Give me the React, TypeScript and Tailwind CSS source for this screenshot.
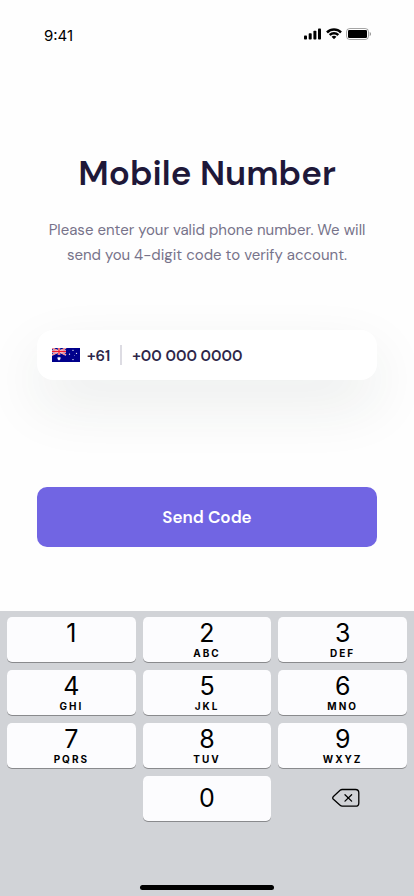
const keys = [
  { digit: "1", letters: "" },
  { digit: "2", letters: "ABC" },
  { digit: "3", letters: "DEF" },
  { digit: "4", letters: "GHI" },
  { digit: "5", letters: "JKL" },
  { digit: "6", letters: "MNO" },
  { digit: "7", letters: "PQRS" },
  { digit: "8", letters: "TUV" },
  { digit: "9", letters: "WXYZ" },
];

const keyClass =
  "flex h-[45px] flex-col items-center rounded-[5px] bg-[#fcfcfe] text-black shadow-[0_1px_0_#898a8d]";

function StatusBar() {
  return (
    <div className="flex h-[72px] items-center justify-between pr-[43px] pl-11 text-black">
      <span className="text-[15px] leading-5">9:41</span>
      <div className="flex items-center gap-1 pb-1">
        <svg width="18" height="12" viewBox="0 0 18 12" fill="currentColor" aria-label="Signal">
          <rect x="0" y="7.5" width="3" height="4" rx="0.8" />
          <rect x="4.7" y="5.2" width="3" height="6.3" rx="0.8" />
          <rect x="9.4" y="2.8" width="3" height="8.7" rx="0.8" />
          <rect x="14" y="0.5" width="3" height="11" rx="0.8" />
        </svg>
        <svg width="16" height="12" viewBox="0 0 16 12" fill="currentColor" aria-label="Wi-Fi">
          <path d="M8 2.8c2.2 0 4.3.85 5.9 2.35.12.12.3.12.42 0l1.35-1.35c.13-.13.13-.33 0-.45a11 11 0 0 0-15.34 0c-.13.12-.13.32 0 .45l1.35 1.35c.12.12.3.12.42 0A8.6 8.6 0 0 1 8 2.8z" />
          <path d="M8 6.4c1.2 0 2.35.45 3.25 1.25.12.12.3.11.42 0l1.35-1.32c.13-.12.13-.32 0-.45a7.3 7.3 0 0 0-10.04 0c-.13.13-.13.33 0 .45l1.35 1.32c.12.11.3.12.42 0A4.9 4.9 0 0 1 8 6.4z" />
          <path d="M10.2 9.05c.13-.12.13-.32-.01-.44a3.45 3.45 0 0 0-4.38 0c-.14.12-.14.32-.01.44l2 1.99c.12.12.3.12.42 0z" />
        </svg>
        <svg width="25" height="12" viewBox="0 0 25 12" aria-label="Battery">
          <rect x="0.5" y="0.5" width="22" height="11" rx="3.3" fill="none" stroke="#000" strokeOpacity="0.35" />
          <path d="M23.7 4v4c.8-.35 1.3-1.1 1.3-2s-.5-1.65-1.3-2z" fill="#000" fillOpacity="0.4" />
          <rect x="2" y="2" width="19" height="8" rx="1.3" fill="#000" />
        </svg>
      </div>
    </div>
  );
}

function AustraliaFlag() {
  return (
    <svg width="28" height="14" viewBox="0 0 28 14" className="shrink-0" aria-hidden="true">
      <rect width="28" height="14" fill="#00008b" />
      <path d="M0 0L14 7M14 0L0 7" stroke="#fff" strokeWidth="1.6" />
      <path d="M0 0L14 7M14 0L0 7" stroke="#f22" strokeWidth="0.7" />
      <path d="M7 0V7M0 3.5H14" stroke="#fff" strokeWidth="2.4" />
      <path d="M7 0V7M0 3.5H14" stroke="#f01c30" strokeWidth="1.3" />
      <path fill="#fff" d="M7 8.4l.5 1.2 1.25-.35-.65 1.15 1.1.7-1.3.2.1 1.3-1-.85-1 .85.1-1.3-1.3-.2 1.1-.7-.65-1.15 1.25.35z" />
      <g fill="#fff">
        <circle cx="21" cy="2.3" r="0.65" />
        <circle cx="17.5" cy="6.2" r="0.65" />
        <circle cx="24.5" cy="5.3" r="0.65" />
        <circle cx="21" cy="11.6" r="0.7" />
        <circle cx="22.5" cy="7.7" r="0.4" />
      </g>
    </svg>
  );
}

function Keypad() {
  return (
    <div className="flex grow flex-col justify-between bg-[#d1d3d7] px-[7px] py-1.5">
      <div className="grid grid-cols-3 gap-x-[7px] gap-y-2 pb-14">
        {keys.map((key) => (
          <button key={key.digit} type="button" className={keyClass}>
            <span className="pt-0.5 text-[25px] leading-7">{key.digit}</span>
            <span className="text-[10px] leading-3 font-bold tracking-[2px]">{key.letters}</span>
          </button>
        ))}
        <button type="button" className={`${keyClass} col-start-2 justify-center pb-0.5`}>
          <span className="text-[25px] leading-7">0</span>
        </button>
        <button type="button" aria-label="Delete" className="flex items-center justify-center pb-0.5 pl-1.5 text-black">
          <svg width="28" height="20" viewBox="0 0 28 20" fill="none" stroke="currentColor" strokeWidth="1.3" strokeLinecap="round" strokeLinejoin="round">
            <path d="M10.2 1.5H23.5a3.3 3.3 0 0 1 3.3 3.3v10.1a3.3 3.3 0 0 1-3.3 3.3H10.2c-.8 0-1.5-.3-2.1-.85L1.4 11.2c-.75-.75-.75-1.9 0-2.65L8.1 2.35c.6-.55 1.3-.85 2.1-.85z" />
            <path d="M13 6.7l6.6 6.4M19.6 6.7L13 13.1" />
          </svg>
        </button>
      </div>
      <div className="h-[5px] w-[134px] self-center rounded-full bg-black" />
    </div>
  );
}

export default function App() {
  return (
    <div className="flex min-h-screen flex-col bg-[#fefefe] font-['Inter',sans-serif]">
      <StatusBar />
      <main className="flex flex-col px-[37px] pt-[77px] pb-16">
        <h1 className="text-center font-['DM_Sans','Inter',sans-serif] text-[35px] leading-[48px] font-semibold text-[#1e1839]">
          Mobile Number
        </h1>
        <p className="pt-[21px] text-center font-['DM_Sans','Open_Sans',sans-serif] text-[15px] leading-[25px] text-[#77738a]">
          Please enter your valid phone number. We will send you 4-digit code to verify account.
        </p>
        <form className="flex flex-col gap-[107px] pt-[62px] font-['DM_Sans','Inter',sans-serif]">
          <div className="flex h-[50px] items-center rounded-2xl bg-white px-[15px] text-[15px] font-semibold text-[#2e2749] shadow-[0_24px_60px_rgba(30,50,45,0.09)]">
            <button type="button" aria-label="Country code" className="flex items-center gap-[7px] pr-2.5">
              <AustraliaFlag />
              <span className="pt-0.5">+61</span>
            </button>
            <div className="h-5 w-0.5 bg-[#dddce3]" />
            <input
              type="tel"
              aria-label="Phone number"
              placeholder="+00 000 0000"
              className="min-w-0 flex-1 bg-transparent pt-0.5 pl-2.5 outline-none placeholder:text-[#2e2749]"
            />
          </div>
          <button type="button" className="h-[60px] rounded-[10px] bg-[#7165e3] pt-0.5 text-[17px] font-semibold text-white">
            Send Code
          </button>
        </form>
      </main>
      <Keypad />
    </div>
  );
}
